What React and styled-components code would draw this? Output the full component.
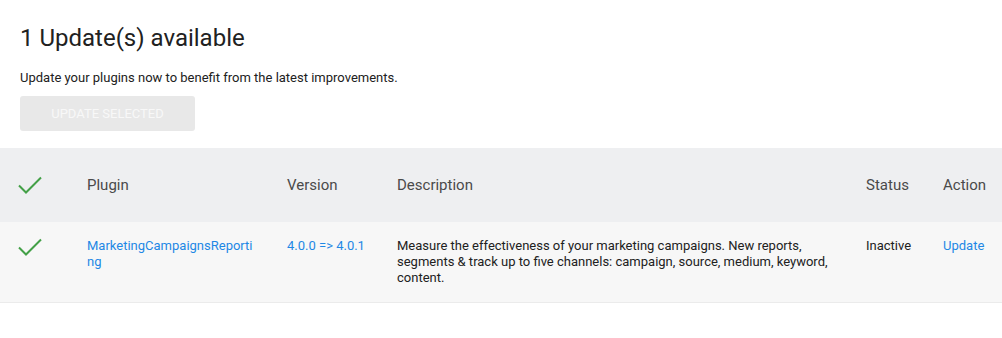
import React from 'react';
import styled, { createGlobalStyle } from 'styled-components';

const GlobalStyle = createGlobalStyle`
  body {
    margin: 0;
    background: #fff;
    font-family: Roboto, "Liberation Sans", Arial, sans-serif;
    color: #212121;
  }
`;

const Page = styled.div`
  width: 1002px;
`;

const Intro = styled.div`
  padding: 22px 20px 17px;
`;

const Title = styled.h2`
  margin: 0;
  font-size: 24px;
  font-weight: 400;
  line-height: 32px;
  color: #212121;
`;

const Lead = styled.p`
  margin: 16px 0 10px;
  font-size: 13px;
  line-height: 16px;
`;

const UpdateButton = styled.button`
  width: 175px;
  height: 35px;
  border: none;
  border-radius: 3px;
  background: #e8e8e8;
  color: #f8f8f8;
  font-family: inherit;
  font-size: 13px;
  text-transform: uppercase;
  cursor: default;
`;

const Grid = styled.div`
  display: grid;
  grid-template-columns: 67px 200px 110px 469px 77px 1fr;
`;

const HeadRow = styled(Grid)`
  background: #eeeff1;
  height: 74px;
  align-items: center;
`;

const BodyRow = styled(Grid)`
  background: #f7f7f7;
  border-bottom: 1px solid #ebebeb;
  min-height: 80px;
  align-items: start;
`;

const HeadCell = styled.div`
  padding-left: 20px;
  font-size: 15px;
  color: #4a4a4a;
  ${({ $check }) => $check && 'padding-left: 18px; display: flex;'}
`;

const Cell = styled.div`
  padding: 16px ${({ $pr }) => $pr || 10}px 0 20px;
  font-size: 13px;
  line-height: 16px;
  color: #212121;
  ${({ $check }) => $check && 'padding: 16px 0 0 18px; display: flex;'}
  ${({ $break }) => $break && 'word-break: break-all;'}
`;

const Link = styled.a`
  color: #1e88e5;
  text-decoration: none;
  cursor: pointer;
`;

const Check = () => (
  <svg width="24" height="18" viewBox="0 0 24 18">
    <path d="M1 9.5 L8 16.5 L23 1.5" fill="none" stroke="#43a047" strokeWidth="2" />
  </svg>
);

export default function App() {
  return (
    <Page>
      <GlobalStyle />
      <Intro>
        <Title>1 Update(s) available</Title>
        <Lead>Update your plugins now to benefit from the latest improvements.</Lead>
        <UpdateButton disabled>Update selected</UpdateButton>
      </Intro>
      <HeadRow>
        <HeadCell $check><Check /></HeadCell>
        <HeadCell>Plugin</HeadCell>
        <HeadCell>Version</HeadCell>
        <HeadCell>Description</HeadCell>
        <HeadCell>Status</HeadCell>
        <HeadCell>Action</HeadCell>
      </HeadRow>
      <BodyRow>
        <Cell $check><Check /></Cell>
        <Cell $break $pr={12}><Link>MarketingCampaignsReporting</Link></Cell>
        <Cell><Link>4.0.0 =&gt; 4.0.1</Link></Cell>
        <Cell>
          Measure the effectiveness of your marketing campaigns. New reports, segments &amp; track up to five
          channels: campaign, source, medium, keyword, content.
        </Cell>
        <Cell>Inactive</Cell>
        <Cell><Link>Update</Link></Cell>
      </BodyRow>
    </Page>
  );
}
